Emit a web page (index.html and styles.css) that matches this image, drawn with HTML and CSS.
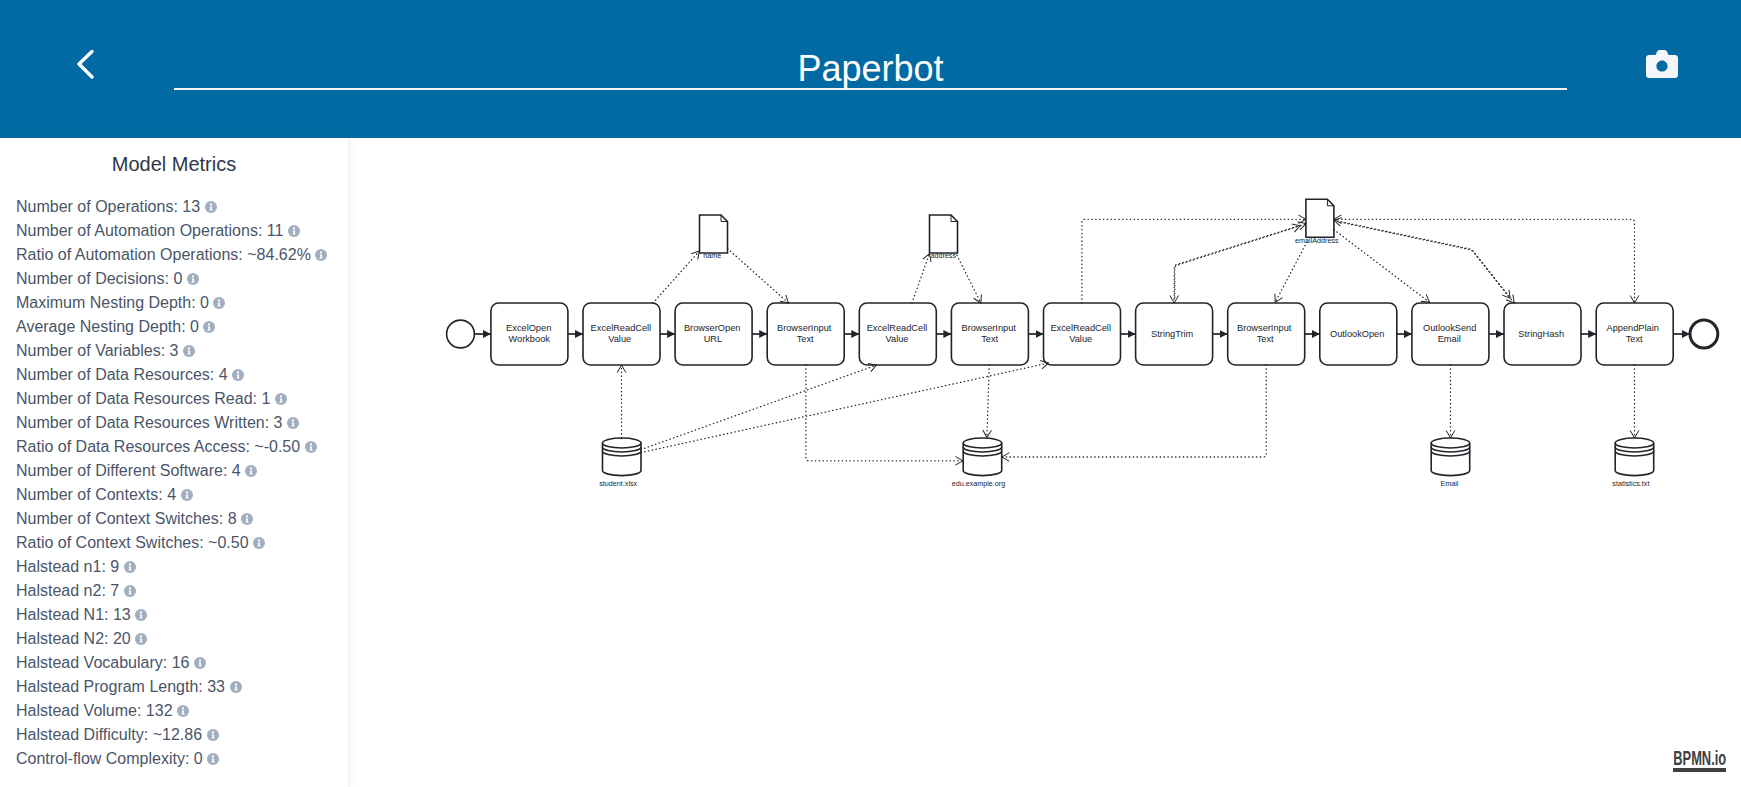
FILE: index.html
```html
<!DOCTYPE html>
<html>
	<head>
		<meta charset="UTF-8">
		<title>Paperbot</title>
		<link rel="stylesheet" href="styles.css">
	</head>
	<body>
		<svg class="sprites" width="0" height="0">
			<symbol id="info" viewBox="0 0 12 12">
				<circle cx="6" cy="6" r="6" fill="#a0aec0"/>
				<circle cx="6" cy="3.4" r="1.1" fill="#fff"/>
				<path d="M4.7 5.2H6.9V8.4H7.6V9.4H4.6V8.4H5.3V6.2H4.7Z" fill="#fff"/>
			</symbol>
		</svg>
		<header id="top">
			<a class="back" href="#">
				<svg width="18" height="30" viewBox="0 0 18 30"><path d="M16 2.5L3 15L16 28" fill="none" stroke="#fff" stroke-width="3.4" stroke-linecap="round" stroke-linejoin="round"/></svg>
			</a>
			<h1 class="title">Paperbot</h1>
			<a class="shot" href="#">
				<svg width="32" height="28" viewBox="0 0 32 28"><path fill-rule="evenodd" d="M3 5H9.5L11 1.8C11.5 .7 12.5 0 13.8 0H18.2C19.5 0 20.5 .7 21 1.8L22.5 5H29C30.7 5 32 6.3 32 8V25C32 26.7 30.7 28 29 28H3C1.3 28 0 26.7 0 25V8C0 6.3 1.3 5 3 5ZM16 10.4C12.9 10.4 10.4 12.9 10.4 16S12.9 21.6 16 21.6S21.6 19.1 21.6 16S19.1 10.4 16 10.4Z" fill="#f4f6fa"/></svg>
			</a>
		</header>
		<div id="content">
			<aside id="metrics">
				<h2>Model Metrics</h2>
				<ul>
					<li>Number of Operations: 13 <svg class="info"><use href="#info"/></svg></li>
					<li>Number of Automation Operations: 11 <svg class="info"><use href="#info"/></svg></li>
					<li>Ratio of Automation Operations: ~84.62% <svg class="info"><use href="#info"/></svg></li>
					<li>Number of Decisions: 0 <svg class="info"><use href="#info"/></svg></li>
					<li>Maximum Nesting Depth: 0 <svg class="info"><use href="#info"/></svg></li>
					<li>Average Nesting Depth: 0 <svg class="info"><use href="#info"/></svg></li>
					<li>Number of Variables: 3 <svg class="info"><use href="#info"/></svg></li>
					<li>Number of Data Resources: 4 <svg class="info"><use href="#info"/></svg></li>
					<li>Number of Data Resources Read: 1 <svg class="info"><use href="#info"/></svg></li>
					<li>Number of Data Resources Written: 3 <svg class="info"><use href="#info"/></svg></li>
					<li>Ratio of Data Resources Access: ~-0.50 <svg class="info"><use href="#info"/></svg></li>
					<li>Number of Different Software: 4 <svg class="info"><use href="#info"/></svg></li>
					<li>Number of Contexts: 4 <svg class="info"><use href="#info"/></svg></li>
					<li>Number of Context Switches: 8 <svg class="info"><use href="#info"/></svg></li>
					<li>Ratio of Context Switches: ~0.50 <svg class="info"><use href="#info"/></svg></li>
					<li>Halstead n1: 9 <svg class="info"><use href="#info"/></svg></li>
					<li>Halstead n2: 7 <svg class="info"><use href="#info"/></svg></li>
					<li>Halstead N1: 13 <svg class="info"><use href="#info"/></svg></li>
					<li>Halstead N2: 20 <svg class="info"><use href="#info"/></svg></li>
					<li>Halstead Vocabulary: 16 <svg class="info"><use href="#info"/></svg></li>
					<li>Halstead Program Length: 33 <svg class="info"><use href="#info"/></svg></li>
					<li>Halstead Volume: 132 <svg class="info"><use href="#info"/></svg></li>
					<li>Halstead Difficulty: ~12.86 <svg class="info"><use href="#info"/></svg></li>
					<li>Control-flow Complexity: 0 <svg class="info"><use href="#info"/></svg></li>
				</ul>
			</aside>
			<main id="canvas">
				<!-- viewBox uses page coordinates, the same way the modeler keeps its own viewport -->
				<svg class="diagram" viewBox="348.3 137.7 1392 649">
					<defs>
						<marker id="seq" markerUnits="userSpaceOnUse" markerWidth="9" markerHeight="9" refX="8" refY="4" orient="auto">
							<path d="M0 0L8 4L0 8Z" fill="#22242a"/>
						</marker>
						<marker id="open" markerUnits="userSpaceOnUse" markerWidth="12" markerHeight="12" refX="8.5" refY="5.5" orient="auto-start-reverse">
							<path d="M1 1.2L8.5 5.5L1 9.8" fill="none" stroke="#22242a" stroke-width="1"/>
						</marker>
						<g id="store">
							<path class="shape" d="M0 5A19.25 5 0 0 1 38.5 5V32.6A19.25 5 0 0 1 0 32.6Z"/>
							<path class="shape" d="M0 5A19.25 5 0 0 0 38.5 5M0 9A19.25 5 0 0 0 38.5 9M0 13A19.25 5 0 0 0 38.5 13"/>
						</g>
						<g id="doc">
							<path class="shape" d="M0 0H21.5L28 6.5V38H0Z"/>
							<path class="shape thin" d="M21.5 0V6.5H28"/>
						</g>
					</defs>

					<text class="label" x="712" y="258">name</text>
					<text class="label" x="943" y="258">address</text>
					<text class="label" x="1316.7" y="242.5">emailAddress</text>
					<text class="label" x="618" y="485.7">student.xlsx</text>
					<text class="label" x="978.3" y="485.7">edu.example.org</text>
					<text class="label" x="1449.3" y="485.7">Email</text>
					<text class="label" x="1630.7" y="485.7">statistics.txt</text>

					<circle class="shape" cx="460.3" cy="333.7" r="13.9"/>
					<circle class="shape end" cx="1703.7" cy="333.7" r="13.9"/>

					<path class="flow" d="M474.2 333.7H490.7"/>
					<path class="flow" d="M567.7 333.7H582.8"/>
					<path class="flow" d="M659.8 333.7H674.9"/>
					<path class="flow" d="M751.9 333.7H767"/>
					<path class="flow" d="M844 333.7H859.1"/>
					<path class="flow" d="M936.1 333.7H951.2"/>
					<path class="flow" d="M1028.2 333.7H1043.3"/>
					<path class="flow" d="M1120.3 333.7H1135.4"/>
					<path class="flow" d="M1212.4 333.7H1227.5"/>
					<path class="flow" d="M1304.5 333.7H1319.6"/>
					<path class="flow" d="M1396.6 333.7H1411.7"/>
					<path class="flow" d="M1488.7 333.7H1503.8"/>
					<path class="flow" d="M1580.8 333.7H1596"/>
					<path class="flow" d="M1673 333.7H1689.8"/>

					<rect class="shape" x="490.7" y="302.7" width="77" height="62" rx="7.7"/>
					<rect class="shape" x="582.8" y="302.7" width="77" height="62" rx="7.7"/>
					<rect class="shape" x="674.9" y="302.7" width="77" height="62" rx="7.7"/>
					<rect class="shape" x="767" y="302.7" width="77" height="62" rx="7.7"/>
					<rect class="shape" x="859.1" y="302.7" width="77" height="62" rx="7.7"/>
					<rect class="shape" x="951.2" y="302.7" width="77" height="62" rx="7.7"/>
					<rect class="shape" x="1043.3" y="302.7" width="77" height="62" rx="7.7"/>
					<rect class="shape" x="1135.4" y="302.7" width="77" height="62" rx="7.7"/>
					<rect class="shape" x="1227.5" y="302.7" width="77" height="62" rx="7.7"/>
					<rect class="shape" x="1319.6" y="302.7" width="77" height="62" rx="7.7"/>
					<rect class="shape" x="1411.7" y="302.7" width="77" height="62" rx="7.7"/>
					<rect class="shape" x="1503.8" y="302.7" width="77" height="62" rx="7.7"/>
					<rect class="shape" x="1596" y="302.7" width="77" height="62" rx="7.7"/>

					<text class="task" x="528.5" y="331">ExcelOpen</text>
					<text class="task" x="529" y="341.7">Workbook</text>
					<text class="task" x="620.7" y="331">ExcelReadCell</text>
					<text class="task" x="619.5" y="341.7">Value</text>
					<text class="task" x="712" y="331">BrowserOpen</text>
					<text class="task" x="712.7" y="341.7">URL</text>
					<text class="task" x="804" y="331">BrowserInput</text>
					<text class="task" x="805" y="341.7">Text</text>
					<text class="task" x="896.8" y="331">ExcelReadCell</text>
					<text class="task" x="896.8" y="341.7">Value</text>
					<text class="task" x="988.5" y="331">BrowserInput</text>
					<text class="task" x="989.5" y="341.7">Text</text>
					<text class="task" x="1080.5" y="331">ExcelReadCell</text>
					<text class="task" x="1080.5" y="341.7">Value</text>
					<text class="task" x="1172" y="337">StringTrim</text>
					<text class="task" x="1264" y="331">BrowserInput</text>
					<text class="task" x="1265" y="341.7">Text</text>
					<text class="task" x="1357" y="337">OutlookOpen</text>
					<text class="task" x="1449.5" y="331">OutlookSend</text>
					<text class="task" x="1449" y="341.7">Email</text>
					<text class="task" x="1541" y="337">StringHash</text>
					<text class="task" x="1632.5" y="331">AppendPlain</text>
					<text class="task" x="1634" y="341.7">Text</text>

					<use href="#doc" x="699.3" y="214.7"/>
					<use href="#doc" x="929.3" y="214.7"/>
					<use href="#doc" x="1305.7" y="199"/>
					<use href="#store" x="602.3" y="437.7"/>
					<use href="#store" x="963" y="437.7"/>
					<use href="#store" x="1431" y="437.7"/>
					<use href="#store" x="1615" y="437.7"/>

					<path class="assoc" d="M652.7 302.7L699.3 250.7"/>
					<path class="assoc" d="M727.3 248.3L788.3 302.7"/>
					<path class="assoc" d="M621.3 437.7V364.7"/>
					<path class="assoc" d="M640.7 449.3L876.3 364.8"/>
					<path class="assoc" d="M640.7 452.3L1048.3 362.7"/>
					<path class="assoc" d="M805.7 364.7V457.5Q805.7 460.5 808.7 460.5H962.7"/>
					<path class="assoc" d="M911.7 302.7L929.3 253.3"/>
					<path class="assoc" d="M956.7 255L980.7 302.7"/>
					<path class="assoc" d="M989 364.7L986.7 437.3"/>
					<path class="assoc" d="M1266 364.7V453.7Q1266 456.7 1263 456.7H1001.7"/>
					<path class="assoc" d="M1081.7 302.7V222Q1081.7 219 1084.7 219H1305.7"/>
					<path class="assoc both" d="M1174 302.7V268Q1174 265 1177 264L1305.7 223.3"/>
					<path class="assoc" d="M1174.6 297V268Q1174.6 265.5 1177.5 264.7L1300 225.5"/>
					<path class="assoc" d="M1306.7 241.7L1275 302"/>
					<path class="assoc" d="M1333.7 229.3L1429.3 302"/>
					<path class="assoc both" d="M1333.7 220L1469 248.5Q1471.7 249.3 1473 251L1514 302.7"/>
					<path class="assoc" d="M1340 221.8L1469.5 249.3Q1472 250 1473.4 251.8L1510 298"/>
					<path class="assoc both" d="M1333.7 219H1631.3Q1634.3 219 1634.3 222V302.7"/>
					<path class="assoc" d="M1450.3 364.7V437.7"/>
					<path class="assoc" d="M1634.3 364.7V437.7"/>
				</svg>
				<a class="brand" href="#"><span>BPMN.io</span></a>
			</main>
		</div>
	</body>
</html>
```

FILE: styles.css
```css
*{margin: 0;padding: 0;box-sizing: border-box;}
html,body{height: 100%;overflow: hidden;}
body{display: flex;flex-direction: column;background: #fff;font-family: "Liberation Sans",Arial,sans-serif;}
li{list-style: none;}
.sprites{position: absolute;}

#top{display: flex;align-items: flex-start;height: 138px;flex: none;background: #026aa2;padding-top: 50px;}
.back{display: block;width: 174px;padding-left: 76px;margin-top: -1px;}
.back svg,.shot svg{display: block;}
.title{width: 1393px;height: 40px;line-height: 38px;border-bottom: 2px solid #f4f6fa;font-size: 36px;font-weight: normal;text-align: center;color: #fff;}
.shot{display: block;padding-left: 79px;}

#content{display: flex;flex: 1;min-height: 0;}
#metrics{width: 348px;flex: none;padding: 12px 16px 0;box-shadow: 2px 0 6px rgba(0,0,0,.08);}
#metrics h2{font-size: 20px;line-height: 28px;font-weight: normal;color: #2d3748;text-align: center;margin-bottom: 17px;}
#metrics li{display: flex;align-items: center;gap: 4.5px;font-size: 16px;line-height: 24px;color: #4a5568;white-space: nowrap;}
.info{width: 12px;height: 12px;flex: none;}

#canvas{flex: 1;min-width: 0;position: relative;}
.diagram{display: block;width: 100%;height: 100%;}
.shape{fill: #fff;stroke: #22242a;stroke-width: 1.6;}
.thin{fill: none;stroke-width: 1;}
.end{stroke-width: 3;}
.flow{fill: none;stroke: #22242a;stroke-width: 1.7;marker-end: url(#seq);}
.assoc{fill: none;stroke: #22242a;stroke-width: 1.3;stroke-dasharray: .4 3.45;stroke-linecap: round;marker-end: url(#open);}
.both{marker-start: url(#open);}
.task,.label{font-family: "Liberation Sans",Arial,sans-serif;fill: #22242a;text-anchor: middle;}
.task{font-size: 9.24px;}
.label{font-size: 7.2px;}

/* no narrow face is installed, so the wordmark is squeezed from the right edge */
.brand{position: absolute;right: 15px;bottom: 15px;width: 53px;height: 22px;border-bottom: 4px solid #404040;display: flex;justify-content: flex-end;text-decoration: none;}
.brand span{flex: none;font-size: 19.5px;line-height: 17px;font-weight: bold;color: #404040;transform: scaleX(.66);transform-origin: right;}
```
